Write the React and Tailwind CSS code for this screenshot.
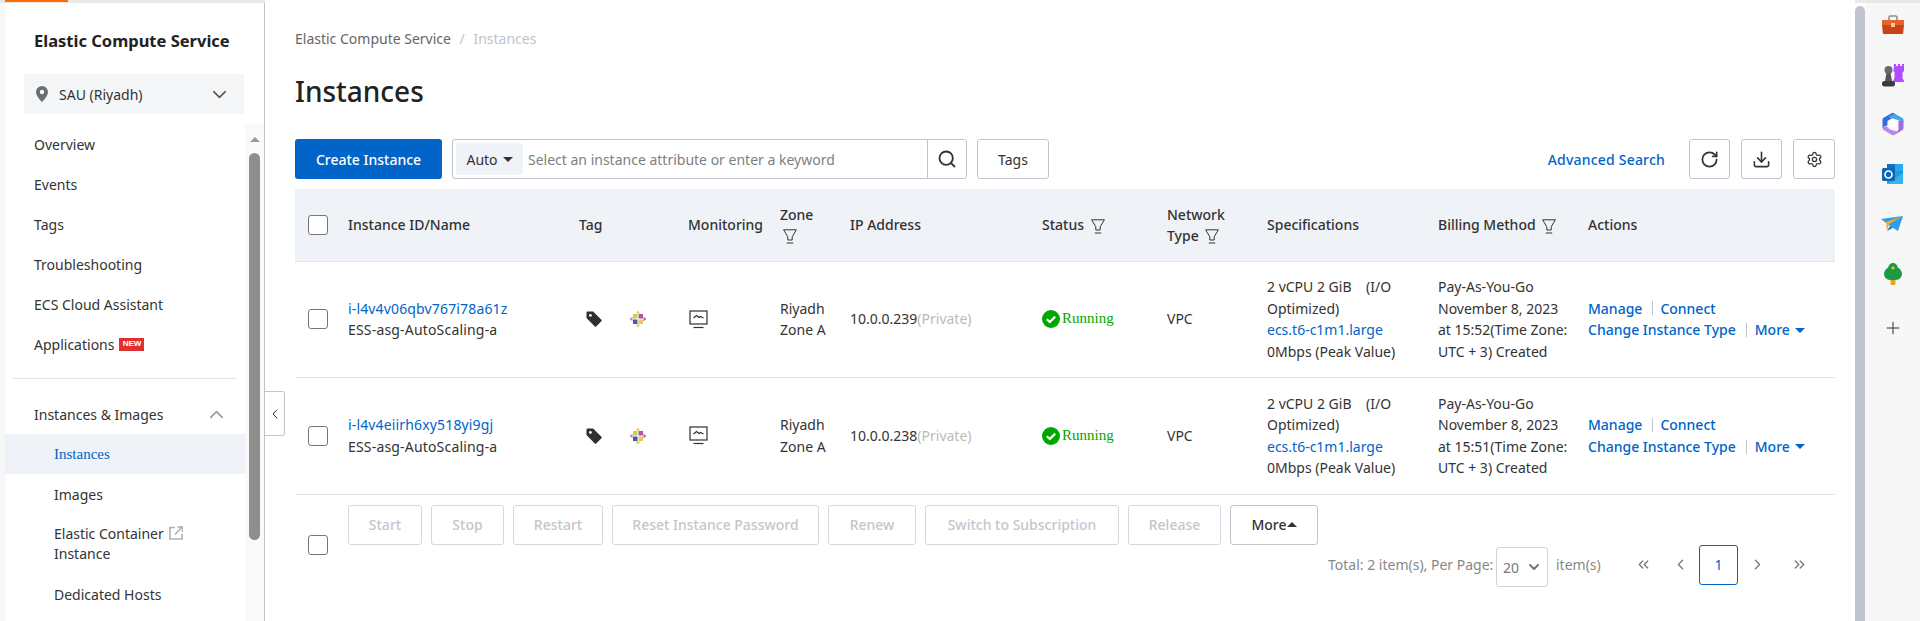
import React from 'react';
import { ChevronDown, ChevronUp, ChevronLeft, Search, RotateCw, Download, Settings, Plus, ChevronsLeft, ChevronsRight, ChevronRight } from 'lucide-react';

function FilterIcon() {
  return (
    <svg width="14" height="15" viewBox="0 0 14 15" fill="none" stroke="#333" strokeWidth="1" className="inline-block">
      <path d="M0.6 0.800h12.800L9.200 7.800v3.200H4.800V7.800z" />
      <path d="M3.800 14h6.400" />
    </svg>
  );
}

function Caret({ up = false, color = '#333' }) {
  return (
    <svg width="10" height="5" viewBox="0 0 10 5" className="inline-block" fill={color}>
      <path d={up ? 'M0 5L5 0l5 5z' : 'M0 0l5 5 5-5z'} />
    </svg>
  );
}

function TagIcon() {
  return (
    <svg width="16" height="16" viewBox="0 0 16 16">
      <path fill="#2f2f2f" d="M0.5 1.5A1 1 0 0 1 1.5 .5h5.6L15.4 8.8a1 1 0 0 1 0 1.4l-5.2 5.2a1 1 0 0 1-1.4 0L0.5 7.1z" />
      <circle cx="4.4" cy="4.4" r="1.4" fill="#fff" />
    </svg>
  );
}

function CentosIcon() {
  return (
    <svg width="18" height="18" viewBox="0 0 18 18">
      <path fill="#b5d85e" d="M4 4h4.500v4.500H4z" />
      <path fill="#b5549e" d="M9.500 4H14v4.500H9.500z" />
      <path fill="#55549e" d="M4 9.500h4.500V14H4z" />
      <path fill="#f3c35c" d="M9.500 9.500H14V14H9.500z" />
      <path fill="#f3c35c" d="M6.800 3.500L9 .5l2.200 3z" />
      <path fill="#7a79b8" d="M14.500 6.800L17.500 9l-3 2.200z" />
      <path fill="#b5d85e" d="M6.800 14.500L9 17.500l2.200-3z" />
      <path fill="#c980b8" d="M3.500 6.800L.5 9l3 2.200z" />
    </svg>
  );
}

function MonitorIcon() {
  return (
    <svg width="19" height="19" viewBox="0 0 19 19" fill="none" stroke="#2f2f2f" strokeWidth="1.2">
      <rect x="1" y="1" width="17" height="13" />
      <path d="M4.500 8l3-2.500 2.500 2 1.500-1 3 1.500" />
      <path d="M4.500 17.500h10" />
    </svg>
  );
}

function CheckCircle() {
  return (
    <svg width="18" height="18" viewBox="0 0 18 18">
      <circle cx="9" cy="9" r="9" fill="#00a700" />
      <path d="M4.800 9.200l3 2.800 5.400-5.400" fill="none" stroke="#fff" strokeWidth="2.200" />
    </svg>
  );
}

function PinIcon() {
  return (
    <svg width="12" height="16" viewBox="0 0 12 16" className="mr-[11px]">
      <path fill="#6b6f75" fillRule="evenodd" d="M6 0a6 6 0 0 1 6 6c0 3.500-4 8-6 10C4 14 0 9.500 0 6a6 6 0 0 1 6-6zm0 3.800a2.200 2.200 0 1 0 0 4.400 2.200 2.200 0 0 0 0-4.400z" />
    </svg>
  );
}

function ExternalBox() {
  return (
    <svg width="14" height="14" viewBox="0 0 14 14" fill="none" stroke="#b0b0b0" strokeWidth="1.600" className="ml-[2px] inline-block align-[-1px]">
      <path d="M6 1.500H1v11.500h12V8" />
      <path d="M6 8.500L12.500 1.500M8.500 1h5v5" />
    </svg>
  );
}

function Toolbox() {
  return (
    <svg width="24" height="20" viewBox="0 0 24 20">
      <path d="M8 5V2.500A1.500 1.500 0 0 1 9.500 1h5A1.500 1.500 0 0 1 16 2.500V5" fill="none" stroke="#8a8f94" strokeWidth="1.600" />
      <path fill="#e8622c" d="M1 5h22v5H1z" />
      <path fill="#c84316" d="M1 10h22l-.8 8a1 1 0 0 1-1 1H2.800a1 1 0 0 1-1-1z" />
      <rect x="10" y="8" width="4" height="4" fill="#f3c9a0" />
    </svg>
  );
}

function ChessPieces() {
  return (
    <svg width="24" height="24" viewBox="0 0 24 24">
      <path fill="#b14dff" d="M13 1h2v2h2V1h2v2h2V1h2v7l-1.500 1.500V15l1.500 3v1H12v-1l1.500-3V9.500L12.500 8z" />
      <circle cx="7.500" cy="7" r="4" fill="#6a6a6a" />
      <path fill="#555" d="M5.500 10h4l1.500 8H4z" />
      <rect x="1" y="18" width="13" height="5.500" rx="2.500" fill="#3a3a3a" />
    </svg>
  );
}

function Copilot365() {
  return (
    <svg width="22" height="24" viewBox="0 0 22 24">
      <path fill="#2f6fd6" d="M10 1L2 5.500A2.500 2.500 0 0 0 .5 8v8l5-3V9l7-4.500L14 3l-1.500-1.500A2.500 2.500 0 0 0 10 1z" />
      <path fill="#4aa3e8" d="M12.500 1.500l7.500 4.300A2.500 2.500 0 0 1 21.500 8v3L16 8 6 5z" />
      <path fill="#a06cdc" d="M21.500 9v7a2.500 2.500 0 0 1-1.500 2.300L13 22.500l3.500-5V9z" />
      <path fill="#b98be6" d="M.5 14v2a2.500 2.500 0 0 0 1.500 2.300L9.500 22.700a2.500 2.500 0 0 0 3 0l4.500-2.700-9-2.500-3-3z" />
      <circle cx="11" cy="12" r="4.300" fill="#fff" />
    </svg>
  );
}

function Outlook() {
  return (
    <svg width="22" height="22" viewBox="0 0 22 22">
      <rect x="5" y="1" width="16" height="20" rx="1" fill="#1a9ae0" />
      <rect x="5" y="1" width="8" height="7" fill="#0f72c4" />
      <rect x="13" y="1" width="8" height="7" fill="#28a8ea" />
      <path d="M5 21h16V10l-8 5z" fill="#38b2ee" />
      <rect x="0" y="5" width="13" height="13" rx="1.500" fill="#0f64b8" />
      <circle cx="6.500" cy="11.500" r="3.500" fill="none" stroke="#fff" strokeWidth="1.600" />
    </svg>
  );
}

function PaperPlane() {
  return (
    <svg width="23" height="16" viewBox="0 0 23 16">
      <path fill="#2f9cf0" d="M0 3l22-3-5 15-8-5z" />
      <path fill="#f3b21b" d="M5 6L22 0 8 8l-2 7z" />
      <path fill="#1978d4" d="M6 15l3-5 3 1.800z" />
    </svg>
  );
}

function TreeIcon() {
  return (
    <svg width="18" height="22" viewBox="0 0 18 22">
      <rect x="6.500" y="15" width="5" height="7" rx="1" fill="#eda21a" />
      <path fill="#1a9a45" d="M9 0c3 0 4.500 2.500 4.800 4.500C16.500 6 18 8.500 18 11a6 6 0 0 1-6 6H6a6 6 0 0 1-6-6c0-2.500 1.500-5 4.200-6.500C4.500 2.500 6 0 9 0z" />
      <path fill="#f2c018" d="M9 3l2 2-2 2-2-2z" />
    </svg>
  );
}

function NavItem({ children, sub = false }) {
  return (
    <div className={`flex h-10 items-center ${sub ? 'pl-[49px]' : 'pl-[29px]'}`}>{children}</div>
  );
}

function Sidebar() {
  return (
    <aside className="flex w-[260px] shrink-0 flex-col border-r border-[#c0c4cc] bg-white">
      <div className="flex h-[74px] items-start pl-[29px] pt-[28px] text-[16.500px] font-bold leading-[26px] text-[#222]">
        Elastic Compute Service
      </div>
      <div className="ml-[19px] flex h-10 w-[220px] shrink-0 items-center bg-[#f5f6f8] pl-[12px] pr-[13px]">
        <PinIcon />
        <span className="flex-1">SAU (Riyadh)</span>
        <ChevronDown size={23} strokeWidth={1.600} className="text-[#555]" />
      </div>
      <div className="mt-[10px] flex min-h-0 flex-1">
        <nav className="w-[240px] shrink-0">
          <NavItem>Overview</NavItem>
          <NavItem>Events</NavItem>
          <NavItem>Tags</NavItem>
          <NavItem>Troubleshooting</NavItem>
          <NavItem>ECS Cloud Assistant</NavItem>
          <NavItem>
            Applications
            <span className="ml-[5px] flex h-[13px] w-[25px] items-center justify-center bg-[#e03030] font-['Liberation_Sans',sans-serif] text-[8px] font-bold text-white">
              NEW
            </span>
          </NavItem>
          <div className="mx-2 mb-[15px] mt-[14px] h-px bg-[#e3e4e6]" />
          <div className="flex h-10 items-center justify-between pl-[29px] pr-[17px]">
            Instances &amp; Images
            <ChevronUp size={23} strokeWidth={1.600} className="text-[#999]" />
          </div>
          <div className="flex h-10 items-center bg-[#eff2f7] pl-[49px] font-['Liberation_Serif',serif] text-[15px] text-[#0064c8]">
            Instances
          </div>
          <NavItem sub>Images</NavItem>
          <div className="py-[10px] pl-[49px] leading-5">
            Elastic Container <ExternalBox />
            <br />
            Instance
          </div>
          <NavItem sub>Dedicated Hosts</NavItem>
        </nav>
        <div className="w-[19px] bg-[#fafafa] px-1 pt-[13px]">
          <div className="flex h-[6px] justify-center">
            <Caret up color="#9a9a9a" />
          </div>
          <div className="mt-[10px] h-[387px] w-[11px] rounded-[6px] bg-[#8e8e8e]" />
        </div>
      </div>
    </aside>
  );
}

const headCell = 'pl-3 text-left font-medium';
const btnBase = 'flex h-10 items-center justify-center rounded-[3px] border';

function InstanceRow({ id, ip, time }) {
  return (
    <tr className="h-[116.500px] border-b border-[#e3e4e6] leading-[21.600px]">
      <td className="pl-[13px]">
        <input type="checkbox" className="block h-5 w-5 appearance-none rounded-[3px] border border-[#777] bg-white" />
      </td>
      <td className="pl-3">
        <div className="tracking-[0.150px] text-[#0064c8]">{id}</div>
        <div className="tracking-[0.180px]">ESS-asg-AutoScaling-a</div>
      </td>
      <td className="pl-[19px]">
        <div className="flex items-center gap-[27px]">
          <TagIcon />
          <CentosIcon />
        </div>
      </td>
      <td className="pl-[13px]">
        <MonitorIcon />
      </td>
      <td className="pl-3">
        Riyadh
        <br />
        Zone A
      </td>
      <td className="pl-3">
        {ip}
        <span className="text-[#bbb]">(Private)</span>
      </td>
      <td className="pl-3">
        <div className="flex items-center gap-[2px] font-['Liberation_Serif',serif] text-[15px] text-[#00a700]">
          <CheckCircle />
          Running
        </div>
      </td>
      <td className="pl-3">VPC</td>
      <td className="pl-3">
        2 vCPU 2 GiB &nbsp;&nbsp; (I/O
        <br />
        Optimized)
        <br />
        <span className="text-[#0064c8]">ecs.t6-c1m1.large</span>
        <br />
        0Mbps (Peak Value)
      </td>
      <td className="pl-3">
        Pay-As-You-Go
        <br />
        November 8, 2023
        <br />
        at {time}(Time Zone:
        <br />
        UTC + 3) Created
      </td>
      <td className="pl-3 font-medium text-[#0064c8]">
        <div className="flex items-center">
          Manage
          <span className="ml-[10px] mr-[7px] h-[14px] w-px bg-[#c0c4cc]" />
          Connect
        </div>
        <div className="flex items-center">
          Change Instance Type
          <span className="ml-[10px] mr-2 h-[14px] w-px bg-[#c0c4cc]" />
          More
          <span className="ml-[5px] flex">
            <Caret color="#0064c8" />
          </span>
        </div>
      </td>
    </tr>
  );
}

function InstanceTable() {
  return (
    <table className="w-[1540px] table-fixed border-collapse">
      <colgroup>
        <col className="w-[41px]" />
        <col className="w-[231px]" />
        <col className="w-[109px]" />
        <col className="w-[92px]" />
        <col className="w-[70px]" />
        <col className="w-[192px]" />
        <col className="w-[125px]" />
        <col className="w-[100px]" />
        <col className="w-[171px]" />
        <col className="w-[150px]" />
        <col className="w-[259px]" />
      </colgroup>
      <thead>
        <tr className="h-[72px] border-b border-[#e3e4e6] bg-[#eff2f7] leading-[21px]">
          <th className="pl-[13px]">
            <input type="checkbox" className="block h-5 w-5 appearance-none rounded-[3px] border border-[#777] bg-white" />
          </th>
          <th className={headCell}>Instance ID/Name</th>
          <th className={headCell}>Tag</th>
          <th className={headCell}>Monitoring</th>
          <th className={headCell}>
            Zone
            <br />
            <span className="ml-[3px]"><FilterIcon /></span>
          </th>
          <th className={headCell}>IP Address</th>
          <th className={headCell}>
            Status <span className="ml-[3px]"><FilterIcon /></span>
          </th>
          <th className={headCell}>
            Network
            <br />
            Type <span className="ml-[3px]"><FilterIcon /></span>
          </th>
          <th className={headCell}>Specifications</th>
          <th className={headCell}>
            Billing Method <span className="ml-[3px]"><FilterIcon /></span>
          </th>
          <th className={headCell}>Actions</th>
        </tr>
      </thead>
      <tbody>
        <InstanceRow id="i-l4v4v06qbv767i78a61z" ip="10.0.0.239" time="15:52" />
        <InstanceRow id="i-l4v4eiirh6xy518yi9gj" ip="10.0.0.238" time="15:51" />
      </tbody>
    </table>
  );
}

function DisabledBtn({ label, width }) {
  return <div className={`${btnBase} border-[#d5d8dd] font-medium text-[#c4c6cc] ${width}`}>{label}</div>;
}

function Footer() {
  return (
    <div className="flex pl-[13px] pt-[10px]">
      <input type="checkbox" className="mr-5 mt-[30px] block h-5 w-5 appearance-none rounded-[3px] border border-[#777] bg-white" />
      <div className="flex-1">
        <div className="flex gap-[9px]">
          <DisabledBtn label="Start" width="w-[74px]" />
          <DisabledBtn label="Stop" width="w-[73px]" />
          <DisabledBtn label="Restart" width="w-[90px]" />
          <DisabledBtn label="Reset Instance Password" width="w-[207px]" />
          <DisabledBtn label="Renew" width="w-[88px]" />
          <DisabledBtn label="Switch to Subscription" width="w-[194px]" />
          <DisabledBtn label="Release" width="w-[93px]" />
          <div className={`${btnBase} w-[88px] border-[#c0c4cc] font-medium text-[#333]`}>
            More
            <Caret up />
          </div>
        </div>
        <div className="flex h-10 items-center pl-[980px] text-[#888]">
          <span className="w-[168px]">Total: 2 item(s), Per Page:</span>
          <div className="mt-[5px] flex h-10 w-[52px] items-center justify-between rounded-[3px] border border-[#d0d3d8] pl-[6px] pr-[5px] text-[#777]">
            20
            <ChevronDown size={16} strokeWidth={3} />
          </div>
          <span className="ml-2 w-[45px]">item(s)</span>
          <ChevronsLeft size={17} strokeWidth={1.800} className="ml-[34px] text-[#777]" />
          <ChevronLeft size={17} strokeWidth={1.800} className="ml-[20px] text-[#777]" />
          <div className="ml-[10px] flex h-10 w-[39px] items-center justify-center rounded-[3px] border border-[#0064c8] text-[#0064c8]">1</div>
          <ChevronRight size={17} strokeWidth={1.800} className="ml-[11px] text-[#777]" />
          <ChevronsRight size={17} strokeWidth={1.800} className="ml-[25px] text-[#777]" />
        </div>
      </div>
    </div>
  );
}

function Toolbar() {
  return (
    <div className="flex h-10 items-center">
      <div className="flex h-10 w-[147px] items-center justify-center rounded-[3px] bg-[#0064c8] font-medium text-white">
        Create Instance
      </div>
      <div className="ml-[10px] flex h-10 w-[515px] items-center rounded-[3px] border border-[#c0c4cc] p-[3px]">
        <div className="flex h-8 w-[67px] items-center justify-center gap-[5px] rounded-[2px] bg-[#eff2f7]">
          Auto
          <Caret />
        </div>
        <input
          placeholder="Select an instance attribute or enter a keyword"
          className="ml-[5px] min-w-0 flex-1 bg-transparent outline-none placeholder:text-[#808080]"
        />
        <div className="-my-[3px] -mr-[3px] flex h-[38px] w-[39px] items-center justify-center border-l border-[#c0c4cc]">
          <Search size={20} strokeWidth={2.200} />
        </div>
      </div>
      <div className={`${btnBase} ml-[10px] w-[72px] border-[#c0c4cc]`}>Tags</div>
      <div className="ml-auto mr-[24px] font-medium tracking-[0.200px] text-[#0064c8]">Advanced Search</div>
      <div className={`${btnBase} w-[41px] border-[#c0c4cc]`}>
        <RotateCw size={19} strokeWidth={2.200} />
      </div>
      <div className={`${btnBase} ml-[11px] w-[41px] border-[#c0c4cc]`}>
        <Download size={19} strokeWidth={2} />
      </div>
      <div className={`${btnBase} ml-[11px] w-[42px] border-[#c0c4cc]`}>
        <Settings size={17} strokeWidth={1.800} />
      </div>
    </div>
  );
}

function RightRail() {
  return (
    <div className="flex w-[55px] shrink-0 flex-col items-center bg-[#f7f7f7] pt-[14px]">
      <div className="flex h-[22px] items-center"><Toolbox /></div>
      <div className="mt-[27px] flex h-[24px] items-center"><ChessPieces /></div>
      <div className="mt-[26px] flex h-[22px] items-center"><Copilot365 /></div>
      <div className="mt-[28px] flex h-[22px] items-center"><Outlook /></div>
      <div className="mt-[28px] flex h-[22px] items-center"><PaperPlane /></div>
      <div className="mt-[28px] flex h-[22px] items-center"><TreeIcon /></div>
      <div className="mt-[33px]"><Plus size={20} strokeWidth={1.200} className="text-[#333]" /></div>
    </div>
  );
}

export default function App() {
  return (
    <div className="relative flex h-[621px] overflow-hidden bg-[#f7f7f7] font-['Noto_Sans',sans-serif] text-[14px] text-[#333]">
      {/* top shadow and console progress bar */}
      <div className="absolute inset-x-0 top-0 h-[3px] bg-[#e8e8e8]">
        <div className="ml-[5px] h-[2px] w-[63px] bg-[#ff6a00]" />
      </div>
      <div className="w-[5px] shrink-0" />
      <Sidebar />
      <main className="relative flex-1 bg-white px-[20px] pl-[30px]">
        <div className="absolute left-0 top-[391px] flex h-[45px] w-5 items-center justify-center rounded-r-[3px] border border-l-0 border-[#c0c4cc] bg-white">
          <ChevronLeft size={16} strokeWidth={1.500} />
        </div>
        <div className="pt-[29px] leading-5 text-[#666]">
          Elastic Compute Service <span className="mx-[5px] text-[#c0c4cc]">/</span> <span className="text-[#c0c4cc]">Instances</span>
        </div>
        <h1 className="mt-[23px] text-[28px] font-medium leading-[38px] text-[#222]">Instances</h1>
        <div className="mt-[29px]">
          <Toolbar />
        </div>
        <div className="mt-[10px]">
          <InstanceTable />
        </div>
        <Footer />
      </main>
      <div className="w-[10px] shrink-0 bg-white pt-[6px]">
        <div className="h-full rounded-t-[5px] bg-[#c0c4cc]" />
      </div>
      <RightRail />
    </div>
  );
}
